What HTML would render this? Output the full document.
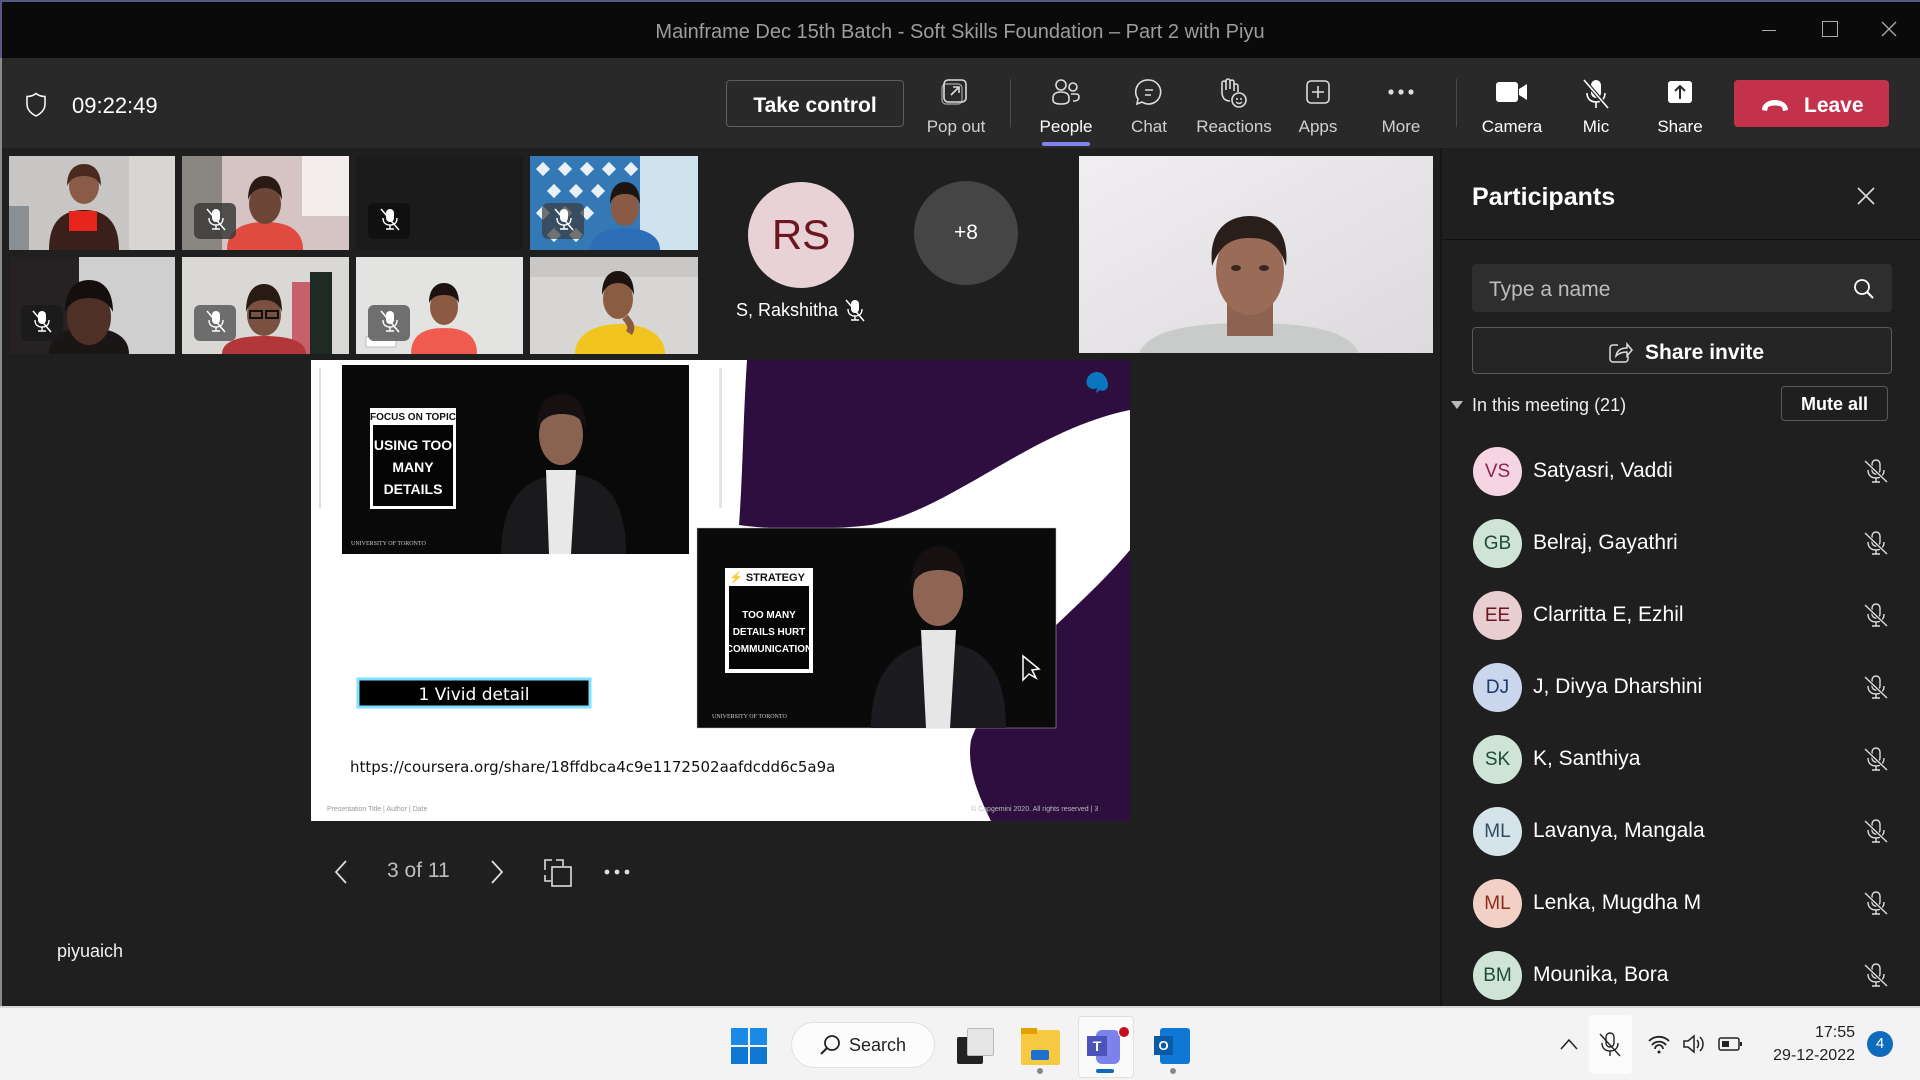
<!DOCTYPE html>
<html><head><meta charset="utf-8">
<style>
*{margin:0;padding:0;box-sizing:border-box}
body{width:1920px;height:1080px;overflow:hidden;background:#1f1f1f;font-family:"Liberation Sans",sans-serif;position:relative;color:#fff}
.a{position:absolute}
.lbl{position:absolute;top:117px;font-size:17px;color:#d0d0d0;transform:translateX(-50%);white-space:nowrap}
.ic{position:absolute;top:78px;transform:translateX(-50%)}
.av{position:absolute;left:1473px;width:49px;height:49px;border-radius:50%;font-size:19px;text-align:center;line-height:49px}
.nm{position:absolute;left:1533px;font-size:21px;color:#fff}
.pm{position:absolute;left:1864px}
</style></head><body>
<div class="a" style="left:0;top:0;width:1920px;height:58px;background:#0a0a0a;border-top:2px solid #585884;border-left:2px solid #585884"></div>
<div class="a" style="left:0;top:21px;width:1920px;text-align:center;font-size:20px;color:#9d9d9d">Mainframe Dec 15th Batch - Soft Skills Foundation – Part 2 with Piyu</div>
<div class="a" style="left:1762px;top:30px;width:14px;height:1px;background:#aaa"></div>
<div class="a" style="left:1822px;top:21px;width:16px;height:16px;border:1px solid #aaa"></div>
<svg class="a" style="left:1881px;top:21px" width="16" height="16"><path d="M1 1L15 15M15 1L1 15" stroke="#aaa" stroke-width="1.3"/></svg>
<div class="a" style="left:0;top:58px;width:1920px;height:90px;background:#292929;border-left:2px solid #8a8a8a"></div>
<svg class="a" style="left:25px;top:92px" width="22" height="26"><path d="M11 1.5C8 4 5 4.5 2 4.5V12c0 6 4 9.5 9 12 5-2.5 9-6 9-12V4.5C17 4.5 14 4 11 1.5z" fill="none" stroke="#fff" stroke-width="1.5"/></svg>
<div class="a" style="left:72px;top:93px;font-size:22px;color:#fff">09:22:49</div>
<div class="a" style="left:726px;top:80px;width:178px;height:47px;border:1px solid #5e5e5e;border-radius:4px;text-align:center;line-height:49px;font-size:21px;font-weight:bold">Take control</div>
<svg class="ic" style="left:955px" width="28" height="28"><rect x="3" y="2" width="22" height="22" rx="4" fill="none" stroke="#ddd" stroke-width="1.6"/><rect x="1" y="6" width="20" height="20" rx="4" fill="none" stroke="#ddd" stroke-width="1.4" opacity=".6"/><path d="M10 17L18 9M12 9h6v6" fill="none" stroke="#ddd" stroke-width="1.6"/></svg>
<div class="lbl" style="left:956px">Pop out</div>
<div class="a" style="left:1010px;top:79px;width:1px;height:48px;background:#4a4a4a"></div>
<svg class="ic" style="left:1066px" width="30" height="28"><circle cx="10" cy="7" r="5" fill="none" stroke="#ddd" stroke-width="1.6"/><circle cx="22" cy="9" r="4" fill="none" stroke="#ddd" stroke-width="1.6"/><path d="M2 20c0-4 3-6 8-6s8 2 8 6v2c0 3-3 4-8 4s-8-1-8-4z M20 16h5c2 0 3 1 3 3 0 3-2 4-6 4" fill="none" stroke="#ddd" stroke-width="1.6"/></svg>
<div class="lbl" style="left:1066px;color:#fff">People</div>
<div class="a" style="left:1042px;top:142px;width:48px;height:4px;border-radius:2px;background:#7f85f5"></div>
<svg class="ic" style="left:1149px" width="30" height="30"><path d="M15 2a12 12 0 1 1-7 22l-5 2 1-5A12 12 0 0 1 15 2z" fill="none" stroke="#ddd" stroke-width="1.6"/><path d="M11 12h8M11 17h6" stroke="#ddd" stroke-width="1.6"/></svg>
<div class="lbl" style="left:1149px">Chat</div>
<svg class="ic" style="left:1233px" width="32" height="32"><path d="M5 14V5a2 2 0 0 1 4 0v7V3a2 2 0 0 1 4 0v8V4a2 2 0 0 1 4 0v9M17 8a2 2 0 0 1 4 0v6M5 14c0 6 3 9 8 9" fill="none" stroke="#ddd" stroke-width="1.6"/><circle cx="22" cy="22" r="7" fill="#292929" stroke="#ddd" stroke-width="1.6"/><circle cx="20" cy="21" r="1" fill="#ddd"/><circle cx="24" cy="21" r="1" fill="#ddd"/><path d="M19 24c2 2 4 2 6 0" fill="none" stroke="#ddd" stroke-width="1.3"/></svg>
<div class="lbl" style="left:1234px">Reactions</div>
<svg class="ic" style="left:1318px" width="28" height="28"><rect x="3" y="3" width="22" height="22" rx="4" fill="none" stroke="#ddd" stroke-width="1.6"/><path d="M14 8v12M8 14h12" stroke="#ddd" stroke-width="1.6"/></svg>
<div class="lbl" style="left:1318px">Apps</div>
<svg class="ic" style="left:1401px" width="30" height="28"><circle cx="5" cy="14" r="2.6" fill="#ddd"/><circle cx="15" cy="14" r="2.6" fill="#ddd"/><circle cx="25" cy="14" r="2.6" fill="#ddd"/></svg>
<div class="lbl" style="left:1401px">More</div>
<div class="a" style="left:1456px;top:79px;width:1px;height:48px;background:#4a4a4a"></div>
<svg class="ic" style="left:1512px" width="34" height="28"><rect x="1" y="4" width="22" height="20" rx="3" fill="#fff"/><path d="M24 11l8-5v16l-8-5z" fill="#fff"/></svg>
<div class="lbl" style="left:1512px;color:#fff">Camera</div>
<svg class="ic" style="left:1596px" width="30" height="32"><rect x="10" y="2" width="10" height="18" rx="5" fill="#fff"/><path d="M6 15c0 6 4 9 9 9s9-3 9-9M15 24v6" fill="none" stroke="#fff" stroke-width="1.6"/><path d="M3 2l24 28" stroke="#292929" stroke-width="4"/><path d="M3 2l24 28" stroke="#fff" stroke-width="1.6"/></svg>
<div class="lbl" style="left:1596px;color:#fff">Mic</div>
<svg class="ic" style="left:1680px" width="30" height="28"><rect x="3" y="3" width="24" height="22" rx="3" fill="#fff"/><path d="M15 21V8M10 13l5-5 5 5" fill="none" stroke="#292929" stroke-width="2"/></svg>
<div class="lbl" style="left:1680px;color:#fff">Share</div>
<div class="a" style="left:1734px;top:80px;width:155px;height:47px;background:#c4314b;border-radius:4px"></div>
<svg class="a" style="left:1760px;top:97px" width="30" height="16"><path d="M2 13c0-6 6-10 13-10s13 4 13 10l-5 1-1-4c-4-2-10-2-14 0l-1 4z" fill="#fff"/></svg>
<div class="a" style="left:1804px;top:94px;font-size:21px;font-weight:bold">Leave</div>
<div class="a" style="left:0;top:148px;width:2px;height:858px;background:#8a8a8a"></div>

<svg class="a" style="left:9px;top:156px" width="690" height="198">
<g><rect width="166" height="94" fill="#c8c6c4"/><rect x="0" y="50" width="20" height="44" fill="#8a8f94"/><rect x="120" y="0" width="46" height="94" fill="#d8d6d3"/>
<path d="M40 94c0-30 15-40 35-40s35 10 35 40z" fill="#3a1f1b"/><rect x="60" y="55" width="28" height="20" fill="#e8251c"/><ellipse cx="75" cy="30" rx="15" ry="18" fill="#8a5c48"/><path d="M58 30c0-16 8-22 17-22s17 6 17 22c-4-8-10-10-17-10s-13 2-17 10z" fill="#4a2a1e"/></g>
<g transform="translate(173,0)"><rect width="167" height="94" fill="#d6c3c3"/><rect x="0" y="0" width="40" height="94" fill="#8a8682"/><rect x="120" y="0" width="47" height="60" fill="#f2ecec"/>
<path d="M45 94c0-22 18-28 38-28s38 6 38 28z" fill="#e14a3f"/><ellipse cx="83" cy="48" rx="16" ry="20" fill="#6e4638"/><path d="M66 44c0-18 8-24 17-24s17 6 17 24c-3-8-9-12-17-12s-14 4-17 12z" fill="#2a1a16"/><rect x="12" y="47" width="42" height="36" rx="6" fill="#3a3a3a" opacity=".85"/></g>
<g transform="translate(347,0)"><rect width="167" height="94" fill="#1b1b1b"/><rect x="12" y="47" width="42" height="36" rx="6" fill="#101010"/></g>
<g transform="translate(521,0)"><rect width="168" height="94" fill="#cfe3ee"/><rect width="110" height="94" fill="#3479b5"/>
<g fill="#e9f1f7"><rect x="8" y="8" width="10" height="10" transform="rotate(45 13 13)"/><rect x="30" y="8" width="10" height="10" transform="rotate(45 35 13)"/><rect x="52" y="8" width="10" height="10" transform="rotate(45 57 13)"/><rect x="74" y="8" width="10" height="10" transform="rotate(45 79 13)"/><rect x="96" y="8" width="10" height="10" transform="rotate(45 101 13)"/><rect x="19" y="30" width="10" height="10" transform="rotate(45 24 35)"/><rect x="41" y="30" width="10" height="10" transform="rotate(45 46 35)"/><rect x="63" y="30" width="10" height="10" transform="rotate(45 68 35)"/><rect x="85" y="30" width="10" height="10" transform="rotate(45 90 35)"/><rect x="8" y="52" width="10" height="10" transform="rotate(45 13 57)"/><rect x="30" y="52" width="10" height="10" transform="rotate(45 35 57)"/><rect x="52" y="52" width="10" height="10" transform="rotate(45 57 57)"/><rect x="19" y="74" width="10" height="10" transform="rotate(45 24 79)"/><rect x="41" y="74" width="10" height="10" transform="rotate(45 46 79)"/></g>
<path d="M60 94c0-16 18-22 35-22s35 6 35 22z" fill="#2c6fb8"/><ellipse cx="95" cy="52" rx="14" ry="18" fill="#8a5a44"/><path d="M80 48c0-16 7-22 15-22s15 6 15 22c-3-8-8-10-15-10s-12 2-15 10z" fill="#1e1412"/><rect x="12" y="47" width="42" height="36" rx="6" fill="#3a3a3a" opacity=".7"/></g>
<g transform="translate(0,101)"><rect width="166" height="97" fill="#cfcfcf"/><rect width="70" height="97" fill="#262223"/>
<path d="M40 97c0-20 20-26 40-26s40 6 40 26z" fill="#1a1616"/><ellipse cx="80" cy="60" rx="22" ry="28" fill="#4e3026"/><path d="M56 55c0-22 10-32 24-32s24 10 24 32c-5-10-13-14-24-14s-19 4-24 14z" fill="#140e0c"/><rect x="12" y="48" width="42" height="36" rx="6" fill="#1a1a1a" opacity=".85"/></g>
<g transform="translate(173,101)"><rect width="167" height="97" fill="#d9d8d4"/><rect x="110" y="25" width="30" height="72" fill="#c6606a"/><rect x="128" y="15" width="22" height="82" fill="#1f2a24"/>
<path d="M40 97c0-14 20-18 42-18s42 4 42 18z" fill="#b3363a"/><ellipse cx="82" cy="58" rx="17" ry="21" fill="#7a5040"/><path d="M64 55c0-20 8-28 18-28s18 8 18 28c-3-8-9-12-18-12s-15 4-18 12z" fill="#2a1a14"/><rect x="68" y="54" width="12" height="7" fill="none" stroke="#111" stroke-width="2"/><rect x="84" y="54" width="12" height="7" fill="none" stroke="#111" stroke-width="2"/><rect x="12" y="48" width="42" height="36" rx="6" fill="#5a5a5a" opacity=".85"/></g>
<g transform="translate(347,101)"><rect width="167" height="97" fill="#e3e3e1"/><rect x="10" y="80" width="30" height="10" fill="#fff" stroke="#bbb"/>
<path d="M55 97c0-20 14-26 33-26s33 6 33 26z" fill="#ef5c4f"/><ellipse cx="88" cy="50" rx="14" ry="18" fill="#8c5a42"/><path d="M73 46c0-14 7-20 15-20s15 6 15 20c-3-6-8-8-15-8s-12 2-15 8z" fill="#1c1210"/><rect x="12" y="48" width="42" height="36" rx="6" fill="#5a5a5a" opacity=".85"/></g>
<g transform="translate(521,101)"><rect width="168" height="97" fill="#d7d6d4"/><rect x="0" y="0" width="168" height="20" fill="#c9c8c6"/>
<path d="M45 97c0-20 20-30 45-30s45 10 45 30z" fill="#f2c420"/><ellipse cx="88" cy="42" rx="15" ry="20" fill="#8a5c42"/><path d="M72 38c0-18 8-24 16-24s16 6 16 24c-3-8-8-12-16-12s-13 4-16 12z" fill="#1c1210"/><path d="M95 60c5 6 8 10 4 16" stroke="#8a5c42" stroke-width="7" fill="none"/></g>
</svg>
<svg class="a" width="0" height="0"><defs><g id="mm"><rect x="7" y="1" width="8" height="13" rx="4" fill="#fff"/><path d="M4 10c0 5 3 7 7 7s7-2 7-7M11 17v4M7 21h8" fill="none" stroke="#fff" stroke-width="1.4"/><path d="M2 1l18 21" stroke="#fff" stroke-width="1.5"/></g></defs></svg>
<svg class="a" style="left:205px;top:208px" width="22" height="24"><use href="#mm"/></svg>
<svg class="a" style="left:379px;top:208px" width="22" height="24"><use href="#mm"/></svg>
<svg class="a" style="left:553px;top:208px" width="22" height="24"><use href="#mm"/></svg>
<svg class="a" style="left:31px;top:310px" width="22" height="24"><use href="#mm"/></svg>
<svg class="a" style="left:205px;top:310px" width="22" height="24"><use href="#mm"/></svg>
<svg class="a" style="left:379px;top:310px" width="22" height="24"><use href="#mm"/></svg>

<div class="a" style="left:748px;top:182px;width:106px;height:106px;border-radius:50%;background:#e8d2d5;color:#6b1620;font-size:42px;text-align:center;line-height:106px">RS</div>
<div class="a" style="left:914px;top:181px;width:104px;height:104px;border-radius:50%;background:#454545;color:#fff;font-size:21px;text-align:center;line-height:104px">+8</div>
<div class="a" style="left:736px;top:300px;font-size:18px;color:#fff">S, Rakshitha</div>
<svg class="a" style="left:844px;top:299px" width="22" height="24"><use href="#mm"/></svg>
<svg class="a" style="left:1079px;top:156px" width="354" height="197"><defs><linearGradient id="bg" x1="0" y1="0" x2="1" y2="1"><stop offset="0" stop-color="#f0eef0"/><stop offset="1" stop-color="#dcdadc"/></linearGradient></defs><rect width="354" height="197" fill="url(#bg)"/>
<path d="M60 197c10-20 40-30 110-30s100 10 110 30z" fill="#c9cbcb"/><rect x="148" y="140" width="46" height="40" fill="#8e6250"/><ellipse cx="171" cy="115" rx="34" ry="44" fill="#9a6c58"/><path d="M133 110c-4-40 20-50 38-50s40 12 36 50c-6-20-16-28-36-28s-30 8-38 28z" fill="#2a1e1a"/><ellipse cx="157" cy="112" rx="5" ry="3" fill="#3a2620"/><ellipse cx="185" cy="112" rx="5" ry="3" fill="#3a2620"/></svg>

<svg class="a" style="left:311px;top:360px" width="819" height="461">
<rect width="819" height="461" fill="#fff"/>
<path d="M436 0H819V50C720 70 640 150 560 165C520 170 460 170 428 165C432 110 432 60 436 0z" fill="#2d0e3e"/>
<path d="M819 190C760 260 690 300 660 380C655 410 670 440 680 461H819z" fill="#2d0e3e"/>
<rect x="8" y="8" width="2" height="140" fill="#ddd"/><rect x="408" y="8" width="3" height="140" fill="#e4e4e4"/>
<path d="M786 12c-8 0-12 8-10 13 2 4 7 5 10 3l-1 5 4-3c3 2 8 0 8-5 0-5-4-13-11-13z" fill="#0a76c0"/>
<rect x="31" y="5" width="347" height="189" fill="#090909"/>
<path d="M190 194c0-60 30-80 65-80s60 20 60 80z" fill="#1a1a1d"/><path d="M235 110h30l-5 84h-22z" fill="#e8e8e8"/><ellipse cx="250" cy="75" rx="22" ry="30" fill="#8a6252"/><path d="M226 70c0-28 12-36 25-36s24 8 24 36c-4-12-12-16-24-16s-20 4-25 16z" fill="#161010"/>
<rect x="59" y="48" width="86" height="101" fill="#fff"/><rect x="62" y="65" width="80" height="81" fill="#050505"/>
<text x="102" y="60" font-family="Liberation Sans Narrow,Liberation Sans,sans-serif" font-size="10" font-weight="bold" text-anchor="middle" fill="#111">FOCUS ON TOPIC</text>
<g font-family="Liberation Sans Narrow,Liberation Sans,sans-serif" font-size="14" font-weight="bold" fill="#fff" text-anchor="middle"><text x="102" y="90">USING TOO</text><text x="102" y="112">MANY</text><text x="102" y="134">DETAILS</text></g>
<text x="40" y="185" font-family="Liberation Serif,serif" font-size="6" fill="#ccc">UNIVERSITY OF TORONTO</text>
<rect x="386" y="168" width="359" height="200" fill="#0a0a0a" stroke="#bbb" stroke-width=".5"/>
<path d="M560 368c0-60 30-85 70-85s65 25 65 85z" fill="#1c1c20"/><path d="M610 270h35l-6 98h-24z" fill="#e6e6e6"/><ellipse cx="627" cy="233" rx="25" ry="33" fill="#8e6454"/><path d="M600 228c0-32 14-42 28-42s27 10 27 42c-4-14-14-18-27-18s-23 4-28 18z" fill="#161010"/>
<rect x="414" y="208" width="88" height="105" fill="#fff"/><rect x="418" y="226" width="80" height="83" fill="#050505"/>
<text x="456" y="221" font-family="Liberation Sans Narrow,Liberation Sans,sans-serif" font-size="11" font-weight="bold" text-anchor="middle" fill="#111">⚡ STRATEGY</text>
<g font-family="Liberation Sans Narrow,Liberation Sans,sans-serif" font-size="10" font-weight="bold" fill="#fff" text-anchor="middle"><text x="458" y="258">TOO MANY</text><text x="458" y="275">DETAILS HURT</text><text x="458" y="292">COMMUNICATION</text></g>
<text x="401" y="358" font-family="Liberation Serif,serif" font-size="6" fill="#ccc">UNIVERSITY OF TORONTO</text>
<path d="M712 296v24l6-6 7 4-4-8 7-1z" fill="#111" stroke="#fff" stroke-width="1.5"/>
<rect x="47" y="319" width="232" height="28" fill="#000" stroke="#7fe0ff" stroke-width="3"/>
<text x="163" y="340" font-family="DejaVu Sans,sans-serif" font-size="17" fill="#fff" text-anchor="middle">1 Vivid detail</text>
<text x="39" y="412" font-family="DejaVu Sans,sans-serif" font-size="15" fill="#111">https://coursera.org/share/18ffdbca4c9e1172502aafdcdd6c5a9a</text>
<text x="16" y="451" font-family="Liberation Sans,sans-serif" font-size="7" fill="#999">Presentation Title | Author | Date</text>
<text x="660" y="451" font-family="Liberation Sans,sans-serif" font-size="7" fill="#bbb">© Capgemini 2020. All rights reserved |   3</text>
</svg>
<svg class="a" style="left:333px;top:859px" width="16" height="26"><path d="M13 2L3 13l10 11" fill="none" stroke="#ddd" stroke-width="1.8"/></svg>
<div class="a" style="left:387px;top:859px;font-size:21px;color:#bdbdbd">3 of 11</div>
<svg class="a" style="left:489px;top:859px" width="16" height="26"><path d="M3 2l10 11L3 24" fill="none" stroke="#ddd" stroke-width="1.8"/></svg>
<svg class="a" style="left:543px;top:858px" width="30" height="30"><path d="M2 12V2h7M13 2h7v6M2 17v6h6" fill="none" stroke="#ddd" stroke-width="1.6"/><rect x="9" y="9" width="19" height="19" fill="none" stroke="#ddd" stroke-width="1.6"/></svg>
<svg class="a" style="left:603px;top:867px" width="28" height="10"><circle cx="4" cy="5" r="2.4" fill="#ddd"/><circle cx="14" cy="5" r="2.4" fill="#ddd"/><circle cx="24" cy="5" r="2.4" fill="#ddd"/></svg>
<div class="a" style="left:57px;top:941px;font-size:18px;color:#f0f0f0">piyuaich</div>

<div class="a" style="left:1440px;top:148px;width:2px;height:858px;background:#161616"></div>
<div class="a" style="left:1442px;top:239px;width:478px;height:1px;background:#111"></div>
<div class="a" style="left:1472px;top:183px;font-size:25px;font-weight:bold">Participants</div>
<svg class="a" style="left:1856px;top:186px" width="20" height="20"><path d="M2 2l16 16M18 2L2 18" stroke="#ddd" stroke-width="1.6"/></svg>
<div class="a" style="left:1472px;top:264px;width:420px;height:48px;background:#2e2e2e;border-radius:4px"></div>
<div class="a" style="left:1489px;top:278px;font-size:21px;color:#bdbdbd">Type a name</div>
<svg class="a" style="left:1853px;top:278px" width="22" height="22"><circle cx="9" cy="9" r="7" fill="none" stroke="#fff" stroke-width="1.8"/><path d="M14 14l6 6" stroke="#fff" stroke-width="2"/></svg>
<div class="a" style="left:1472px;top:327px;width:420px;height:47px;border:1px solid #5a5a5a;border-radius:4px;background:#252525"></div>
<svg class="a" style="left:1609px;top:341px" width="24" height="22"><path d="M9 4H4a3 3 0 0 0-3 3v11a3 3 0 0 0 3 3h12a3 3 0 0 0 3-3v-3" fill="none" stroke="#ddd" stroke-width="1.5"/><path d="M7 15c1-6 5-8 11-8V3l5 6-5 6v-4c-5 0-8 1-11 4z" fill="none" stroke="#ddd" stroke-width="1.5"/></svg>
<div class="a" style="left:1645px;top:341px;font-size:21px;font-weight:bold">Share invite</div>
<svg class="a" style="left:1451px;top:401px" width="12" height="8"><path d="M0 0h12L6 8z" fill="#bbb"/></svg>
<div class="a" style="left:1472px;top:395px;font-size:18px;color:#eee">In this meeting (21)</div>
<div class="a" style="left:1781px;top:386px;width:107px;height:35px;border:1px solid #5a5a5a;border-radius:4px;text-align:center;line-height:35px;font-size:18px;font-weight:bold">Mute all</div>

<div class="av" style="top:447px;background:#f5d5e2;color:#8c2452">VS</div><div class="nm" style="top:459px">Satyasri, Vaddi</div>
<div class="av" style="top:519px;background:#cfe4d7;color:#1f4d33">GB</div><div class="nm" style="top:531px">Belraj, Gayathri</div>
<div class="av" style="top:591px;background:#e8cdd1;color:#6b1620">EE</div><div class="nm" style="top:603px">Clarritta E, Ezhil</div>
<div class="av" style="top:663px;background:#c9d6eb;color:#1b3a6b">DJ</div><div class="nm" style="top:675px">J, Divya Dharshini</div>
<div class="av" style="top:735px;background:#cfe4d7;color:#1f4d33">SK</div><div class="nm" style="top:747px">K, Santhiya</div>
<div class="av" style="top:807px;background:#d5e3ea;color:#2f4e61">ML</div><div class="nm" style="top:819px">Lavanya, Mangala</div>
<div class="av" style="top:879px;background:#f3d0c6;color:#8a2b1c">ML</div><div class="nm" style="top:891px">Lenka, Mugdha M</div>
<div class="av" style="top:951px;background:#cfe4d7;color:#1f4d33">BM</div><div class="nm" style="top:963px">Mounika, Bora</div>
<svg class="a" width="0" height="0"><defs><g id="pm"><rect x="8" y="1" width="8" height="14" rx="4" fill="none" stroke="#ddd" stroke-width="1.4"/><path d="M4 11c0 5 3 8 8 8s8-3 8-8M12 19v4M8 23h8" fill="none" stroke="#ddd" stroke-width="1.4"/><path d="M1 2l22 21" stroke="#1f1f1f" stroke-width="3"/><path d="M1 2l22 21" stroke="#ddd" stroke-width="1.4"/></g></defs></svg>
<svg class="pm" style="top:459px" width="24" height="24"><use href="#pm"/></svg>
<svg class="pm" style="top:531px" width="24" height="24"><use href="#pm"/></svg>
<svg class="pm" style="top:603px" width="24" height="24"><use href="#pm"/></svg>
<svg class="pm" style="top:675px" width="24" height="24"><use href="#pm"/></svg>
<svg class="pm" style="top:747px" width="24" height="24"><use href="#pm"/></svg>
<svg class="pm" style="top:819px" width="24" height="24"><use href="#pm"/></svg>
<svg class="pm" style="top:891px" width="24" height="24"><use href="#pm"/></svg>
<svg class="pm" style="top:963px" width="24" height="24"><use href="#pm"/></svg>

<div class="a" style="left:0;top:1006px;width:1920px;height:74px;background:#f3f3f3;border-top:2px solid #d6d6d6"></div>
<svg class="a" style="left:731px;top:1028px" width="36" height="36"><rect x="0" y="0" width="17" height="17" fill="#1a8ae6"/><rect x="19" y="0" width="17" height="17" fill="#1a8ae6"/><rect x="0" y="19" width="17" height="17" fill="#0f78d4"/><rect x="19" y="19" width="17" height="17" fill="#0f78d4"/></svg>
<div class="a" style="left:791px;top:1022px;width:144px;height:46px;border-radius:23px;background:#fcfcfc;border:1px solid #e2e2e2"></div>
<svg class="a" style="left:820px;top:1034px" width="22" height="22"><circle cx="12" cy="9" r="7" fill="none" stroke="#222" stroke-width="1.8"/><path d="M7 14l-6 6" stroke="#222" stroke-width="2"/></svg>
<div class="a" style="left:849px;top:1035px;font-size:18px;color:#222">Search</div>
<div class="a" style="left:957px;top:1037px;width:26px;height:27px;background:#222;border-radius:2px"></div>
<div class="a" style="left:967px;top:1028px;width:27px;height:28px;background:#e6e6e6;border:1px solid #bbb;border-radius:2px"></div>
<div class="a" style="left:1021px;top:1030px;width:39px;height:35px;background:#f7c940;border-radius:2px"></div>
<div class="a" style="left:1021px;top:1028px;width:16px;height:6px;background:#e2a100"></div>
<div class="a" style="left:1031px;top:1050px;width:18px;height:10px;background:#1d6fd0;border-radius:2px"></div>
<div class="a" style="left:1037px;top:1068px;width:6px;height:6px;border-radius:50%;background:#888"></div>
<div class="a" style="left:1078px;top:1016px;width:56px;height:62px;background:#fafafa;border:1px solid #e0e0e0;border-radius:4px"></div>
<div class="a" style="left:1096px;top:1030px;width:24px;height:34px;background:#7b83eb;border-radius:6px"></div>
<div class="a" style="left:1087px;top:1036px;width:20px;height:20px;background:#4b53bc;color:#fff;font-size:14px;font-weight:bold;text-align:center;line-height:20px">T</div>
<div class="a" style="left:1118px;top:1026px;width:12px;height:12px;border-radius:50%;background:#c50f1f;border:1px solid #fff"></div>
<div class="a" style="left:1096px;top:1069px;width:18px;height:4px;border-radius:2px;background:#0f6cbd"></div>
<div class="a" style="left:1160px;top:1028px;width:30px;height:36px;background:#0f78d4;border-radius:3px"></div>
<div class="a" style="left:1154px;top:1036px;width:19px;height:19px;background:#0a5aa8;color:#fff;font-size:13px;font-weight:bold;text-align:center;line-height:19px">O</div>
<div class="a" style="left:1170px;top:1068px;width:6px;height:6px;border-radius:50%;background:#888"></div>
<svg class="a" style="left:1560px;top:1038px" width="18" height="12"><path d="M1 11l8-9 8 9" fill="none" stroke="#222" stroke-width="1.5"/></svg>
<div class="a" style="left:1589px;top:1015px;width:43px;height:59px;background:#fbfbfb;border-radius:4px"></div>
<svg class="a" style="left:1599px;top:1032px" width="22" height="26"><rect x="7" y="1" width="8" height="14" rx="4" fill="none" stroke="#222" stroke-width="1.4"/><path d="M3 11c0 5 3 8 8 8s8-3 8-8M11 19v5" fill="none" stroke="#222" stroke-width="1.4"/><path d="M1 2l20 22" stroke="#222" stroke-width="1.4"/></svg>
<svg class="a" style="left:1647px;top:1034px" width="24" height="20"><path d="M2 7a14 14 0 0 1 20 0M5 11a9 9 0 0 1 14 0M8 15a4 4 0 0 1 8 0" fill="none" stroke="#222" stroke-width="1.8"/><circle cx="12" cy="18" r="1.5" fill="#222"/></svg>
<svg class="a" style="left:1682px;top:1033px" width="24" height="22"><path d="M2 8h4l6-5v16l-6-5H2z" fill="none" stroke="#222" stroke-width="1.5"/><path d="M15 7c2 2 2 6 0 8M18 4c4 4 4 10 0 14" fill="none" stroke="#222" stroke-width="1.5"/></svg>
<svg class="a" style="left:1718px;top:1036px" width="26" height="16"><rect x="1" y="2" width="20" height="12" rx="2" fill="none" stroke="#222" stroke-width="1.5"/><rect x="4" y="5" width="7" height="6" fill="#222"/><rect x="22" y="6" width="2" height="4" fill="#222"/></svg>
<div class="a" style="left:1780px;top:1024px;width:75px;text-align:right;font-size:16px;color:#222">17:55</div>
<div class="a" style="left:1755px;top:1047px;width:100px;text-align:right;font-size:16px;color:#222">29-12-2022</div>
<div class="a" style="left:1867px;top:1031px;width:26px;height:26px;border-radius:50%;background:#0f6cbd;color:#fff;font-size:15px;text-align:center;line-height:26px">4</div>
</body></html>
